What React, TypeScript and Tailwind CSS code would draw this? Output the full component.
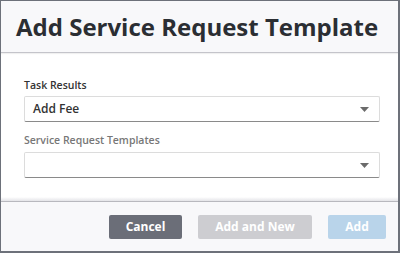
import { useState } from 'react';

function Caret() {
  return (
    <svg width="9" height="5" viewBox="0 0 9 5" className="shrink-0">
      <path d="M0 0 H9 L4.5 5 Z" fill="#6b6b6b" />
    </svg>
  );
}

function SelectBox({ value }: { value: string }) {
  return (
    <div className="flex h-[26px] items-center justify-between rounded-[2px] border border-[#dcdcdc] border-b-[#8a8a8a] bg-white pl-[8px] pr-[10px]">
      <span className="text-[12px] font-semibold leading-none text-[#333]">{value}</span>
      <Caret />
    </div>
  );
}

export default function App() {
  const [result] = useState('Add Fee');

  return (
    <div
      className="flex h-[253px] w-[400px] flex-col overflow-hidden border border-r-2 border-b-2 border-[#6d717a] bg-white"
      style={{ fontFamily: '"Open Sans", "Noto Sans", sans-serif' }}
    >
      <header className="flex h-[52px] shrink-0 items-center border-b border-[#c4c4ca] bg-[#f8f8fa] px-[15px] shadow-[0_1px_1px_rgba(0,0,0,0.06)]">
        <h1 className="text-[24px] font-bold leading-none text-[#2b2e33]">Add Service Request Template</h1>
      </header>

      <main className="flex flex-1 flex-col pl-[23px] pr-[18px] pt-[25px]">
        <label className="mb-[3px] text-[10.5px] font-semibold leading-[15px] text-[#333]">Task Results</label>
        <SelectBox value={result} />
        <label className="mb-[4px] mt-[11px] text-[10.5px] font-semibold leading-[15px] text-[#777]">Service Request Templates</label>
        <SelectBox value="" />
      </main>

      <div className="h-[4px] shrink-0 bg-gradient-to-b from-white to-[#e4e4e8]" />
      <footer className="flex h-[50px] shrink-0 items-center justify-end gap-[16px] border-t border-[#b8b8be] bg-[#f8f8fa] pr-[12px]">
        <button className="h-[24px] w-[73px] rounded-[2px] bg-[#6b6e78] text-[12px] font-bold text-white">Cancel</button>
        <button className="h-[24px] w-[114px] rounded-[2px] bg-[#cdcdd1] text-[12px] font-bold text-white">Add and New</button>
        <button className="h-[24px] w-[58px] rounded-[2px] bg-[#b9d4ea] text-[12px] font-bold text-white">Add</button>
      </footer>
    </div>
  );
}
